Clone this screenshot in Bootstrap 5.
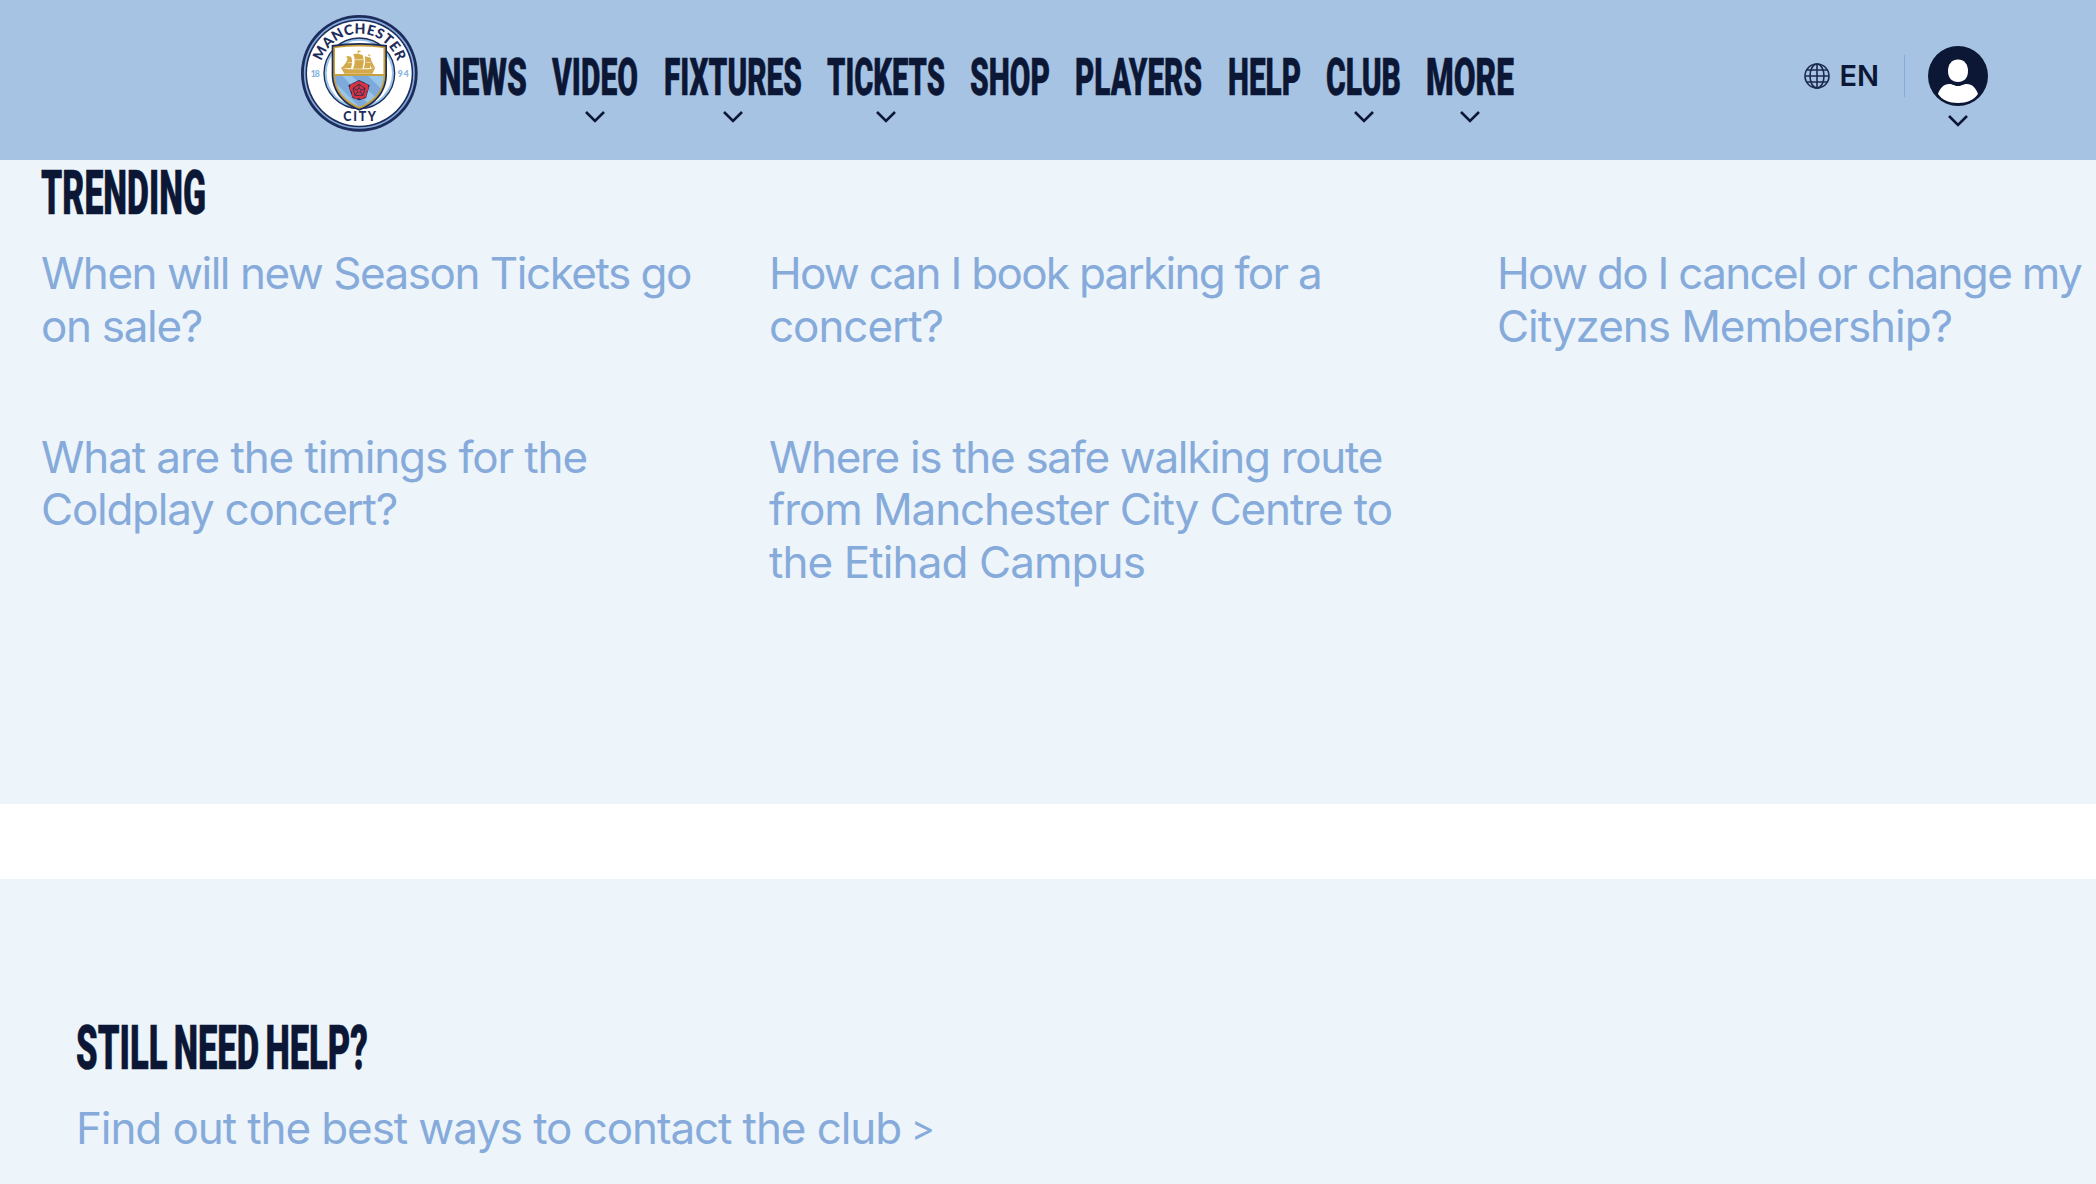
<!DOCTYPE html>
<html lang="en">
<head>
    <meta charset="UTF-8">
    <meta name="viewport" content="width=device-width, initial-scale=1.0">
    <title>Help | Manchester City</title>

    <!-- Bootstrap CSS -->
    <link href="https://cdn.jsdelivr.net/npm/bootstrap@5.3.0/dist/css/bootstrap.min.css" rel="stylesheet">

    <style>
        body {
            font-family: Inter, "Liberation Sans", sans-serif;
            color: #0c1735;
            height: 1184px;
            overflow: hidden;
        }
        .site-header {
            height: 160px;
            padding: 0 108px 0 301px;
            background: #a7c3e4;
        }
        .crest {
            width: 117px;
            height: 117px;
            margin: 15px 22px 0 0;
        }
        .main-menu {
            gap: 27.3px;
            padding-top: 54px;
        }
        .main-menu svg, .title-text {
            display: block;
            overflow: visible;
        }
        .main-menu text, .title-text text {
            font-family: Roboto, "Liberation Sans", sans-serif;
            font-weight: 900;
            fill: #0c1735;
            stroke: #0c1735;
            stroke-width: .5px;
        }
        .main-menu text { font-size: 52.5px; }
        .title-text text {
            font-size: 60.5px;
            word-spacing: -4px;
        }
        .arrow {
            width: 20px;
            height: 12px;
            fill: none;
            stroke: #0c1735;
            stroke-width: 2.6;
        }
        .main-menu .arrow { margin-top: 13px; }
        .lang {
            padding-top: 58px;
            font-size: 29px;
            line-height: 36px;
            font-weight: 600;
            gap: 9px;
        }
        .divider {
            width: 1px;
            height: 42px;
            margin: 55px 23px 0 25px;
            background: #86abdb;
        }
        .account { padding-top: 46px; }
        .account .arrow { margin-top: 9px; }
        .panel { background: #edf4fa; }
        .trending {
            height: 644px;
            padding: 10px 0 0 41px;
        }
        .topics {
            display: grid;
            grid-template-columns: 728px 728px 1fr;
            grid-auto-rows: 183.6px;
            padding-top: 33px;
        }
        .topic {
            color: #86abdb;
            font-size: 44px;
            line-height: 52.5px;
            font-weight: 400;
            text-decoration: none;
            white-space: nowrap;
        }
        .topic span { display: table; }
        .still-help {
            height: 305px;
            margin-top: 75px;
            padding: 146px 0 0 76px;
        }
        .still-help .topic { margin-top: 33px; }
        .still-help .topic .more-sign {
            margin-left: 10px;
            font-size: 36px;
        }
    </style>
</head>
<body>
    <!-- Header -->
    <header class="site-header d-flex align-items-start">
        <a href="#" aria-label="Manchester City">
            <svg class="crest d-block" viewBox="34 30 351 351">
                <defs>
                    <path id="crestArc" d="M90 205A119 119 0 0 1 328 205"/>
                    <clipPath id="shieldClip"><path d="M136 129Q209 119 282 129V209C281 258 249 289 209 305C169 289 137 258 136 209Z"/></clipPath>
                </defs>
                <circle cx="209" cy="205" r="175" fill="#1c2c5b"/>
                <circle cx="209" cy="205" r="164" fill="none" stroke="#86abdb" stroke-width="5"/>
                <circle cx="209" cy="205" r="157" fill="#fff"/>
                <circle cx="209" cy="205" r="106" fill="#98c5e9" stroke="#1c2c5b" stroke-width="4"/>
                <circle cx="209" cy="205" r="98" fill="#fff"/>
                <path d="M126 120Q209 108 292 120V210C291 264 255 300 209 317C163 300 127 264 126 210Z" fill="#1c2c5b"/>
                <path d="M131 125Q209 114 287 125V209C286 261 252 295 209 311C166 295 132 261 131 209Z" fill="#c9a038"/>
                <g clip-path="url(#shieldClip)">
                    <path fill="#fff" d="M130 115H290V208H130Z"/>
                    <path fill="#98c5e9" d="M130 212H290V320H130Z"/>
                    <path fill="#7daadb" d="M130 212H158L235 296L213 310L130 226ZM185 212H235L286 263L265 282ZM130 244L188 304L145 294Z"/>
                    <path fill="#c9a038" d="M130 207H290V212H130Z"/>
                </g>
                <g fill="#d3a94a">
                    <path d="M154 188L174 193H238L257 187L248 206H164Z"/>
                    <path d="M176 154L186 158Q190 174 184 190H153Q171 178 176 154Z"/>
                    <path d="M191 147Q200 144 219 150Q226 169 218 191H190Q200 169 191 147Z"/>
                    <path d="M225 154L243 158Q248 174 240 190H221Q230 172 225 154Z"/>
                    <path d="M243 164L256 188H244ZM171 153L184 155V160H171ZM204 136L215 139L206 143V150H204ZM235 148L244 151L237 154Z"/>
                </g>
                <path d="M188 156Q193 173 187 192M222 152Q228 172 221 192M174 173H187M196 164H221M230 172H243" fill="none" stroke="#fff" stroke-width="1.8"/>
                <path d="M208 225L221 231L240 241L235 258L229 279L209 286L189 279L181 257L176 241L196 231Z" fill="#1c2c5b"/>
                <path d="M208 229Q218 229 221 235Q235 235 236 244Q239 254 231 261Q233 276 223 279Q213 286 208 279Q197 285 192 277Q184 273 187 261Q176 253 181 243Q184 234 196 235Q199 228 208 229Z" fill="#d8343f"/>
                <path d="M208 238L226 250L220 271H196L190 250ZM208 238V249M226 250L214 255M220 271L212 261M196 271L204 261M190 250L202 255" fill="none" stroke="#1c2c5b" stroke-width="2.5"/>
                <circle cx="208" cy="256" r="6" fill="none" stroke="#1c2c5b" stroke-width="2"/>
                <g font-family="Lato, sans-serif" font-weight="900">
                    <text font-size="42" fill="#1c2c5b"><textPath href="#crestArc" startOffset="37" textLength="300" lengthAdjust="spacing">MANCHESTER</textPath></text>
                    <text x="161" y="348" font-size="37" textLength="98" fill="#1c2c5b">CITY</text>
                    <text x="63" y="215" font-size="26" textLength="27" fill="#86b4e0">18</text>
                    <text x="324" y="215" font-size="26" textLength="33" fill="#86b4e0">94</text>
                </g>
            </svg>
        </a>

        <nav class="main-menu d-flex" id="mainMenu"></nav>

        <div class="lang d-flex align-items-center ms-auto">
            <svg width="26" height="26" viewBox="0 0 26 26" fill="none" stroke="#1b2a4d" stroke-width="1.6">
                <circle cx="13" cy="13" r="12"/>
                <ellipse cx="13" cy="13" rx="7" ry="12"/>
                <path d="M13 1V25M1 13H25M3 7H23M3 19H23"/>
            </svg>
            <span>EN</span>
        </div>
        <div class="divider"></div>
        <div class="account d-flex flex-column align-items-center">
            <svg width="60" height="60" viewBox="0 0 60 60">
                <circle cx="30" cy="30" r="30" fill="#0c1735"/>
                <path d="M30 13.500C36 13.500 40 18 40 25C40 32 36 36 30 36S20 32 20 25C20 18 24 13.500 30 13.500Z" fill="#fff"/>
                <path d="M10 48C12 42 16 38 21 38C25 38 26 40 30 40S35 38 39 38C44 38 48 42 50 48C46 54 39 57 30 57S14 54 10 48Z" fill="#fff"/>
            </svg>
            <svg class="arrow" viewBox="0 0 20 12"><path d="M1 1L10 10L19 1"/></svg>
        </div>
    </header>

    <!-- Trending questions -->
    <section class="panel trending">
        <svg class="title-text" width="163" height="44" role="heading" aria-level="2"><text y="44">TRENDING</text></svg>
        <div class="topics">
            <a class="topic" href="#"><span data-width="650">When will new Season Tickets go</span><span data-width="161">on sale?</span></a>
            <a class="topic" href="#"><span data-width="552">How can I book parking for a</span><span data-width="174">concert?</span></a>
            <a class="topic" href="#"><span data-width="584">How do I cancel or change my</span><span data-width="455">Cityzens Membership?</span></a>
            <a class="topic" href="#"><span data-width="546">What are the timings for the</span><span data-width="356">Coldplay concert?</span></a>
            <a class="topic" href="#"><span data-width="613">Where is the safe walking route</span><span data-width="623">from Manchester City Centre to</span><span data-width="376">the Etihad Campus</span></a>
        </div>
    </section>

    <!-- Contact -->
    <section class="panel still-help">
        <svg class="title-text" width="290" height="44" role="heading" aria-level="2"><text y="44">STILL NEED HELP?</text></svg>
        <a class="topic d-flex" href="#"><span data-width="825">Find out the best ways to contact the club</span><span class="more-sign">&gt;</span></a>
    </section>

    <!-- Bootstrap & JavaScript -->
    <script src="https://cdn.jsdelivr.net/npm/bootstrap@5.3.0/dist/js/bootstrap.bundle.min.js"></script>
    <script>
        const menuItems = [
            { label: "NEWS", width: 86 },
            { label: "VIDEO", width: 84, sub: true },
            { label: "FIXTURES", width: 136, sub: true },
            { label: "TICKETS", width: 116, sub: true },
            { label: "SHOP", width: 78 },
            { label: "PLAYERS", width: 125 },
            { label: "HELP", width: 71 },
            { label: "CLUB", width: 73, sub: true },
            { label: "MORE", width: 86, sub: true }
        ];

        document.getElementById("mainMenu").innerHTML = menuItems.map(item => `
            <a href="#" class="d-flex flex-column align-items-center">
                <svg width="${item.width}" height="44"><text y="40.500">${item.label}</text></svg>
                ${item.sub ? `<svg class="arrow" viewBox="0 0 20 12"><path d="M1 1L10 10L19 1"/></svg>` : ""}
            </a>`).join("");

        // Condense headings and menu labels to the width of their box
        document.querySelectorAll(".main-menu text, .title-text text").forEach(text => {
            const width = Number(text.parentNode.getAttribute("width")) + 2;
            const scale = width / text.getComputedTextLength();
            const shift = text.closest(".title-text") ? 0 : -1;
            text.setAttribute("transform", `translate(${shift} 0) scale(${scale} 1)`);
        });

        // Track each line of link text to its set width
        document.querySelectorAll("[data-width]").forEach(line => {
            const extra = line.dataset.width - line.getBoundingClientRect().width;
            line.style.letterSpacing = `${extra / line.textContent.length}px`;
        });
    </script>
</body>
</html>
